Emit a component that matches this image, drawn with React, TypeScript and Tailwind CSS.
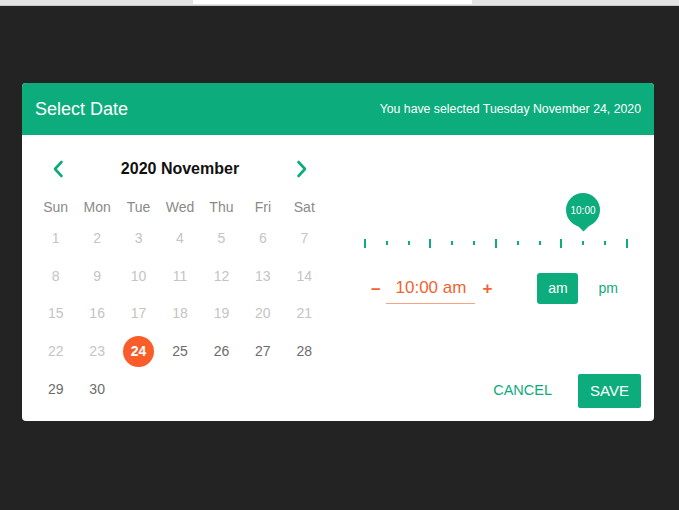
const green = "bg-[#0dac7c]";

const weekdays = ["Sun", "Mon", "Tue", "Wed", "Thu", "Fri", "Sat"];
const days = Array.from({ length: 30 }, (_, i) => i + 1);
const selected = 24;

function Chevron({ dir }: { dir: "left" | "right" }) {
  return (
    <svg width="12" height="18" viewBox="0 0 12 18" fill="none">
      <path
        d={dir === "left" ? "M9.5 2 L3 9 L9.5 16" : "M2.5 2 L9 9 L2.5 16"}
        stroke="#0dac7c"
        strokeWidth="2.6"
        strokeLinecap="round"
        strokeLinejoin="round"
      />
    </svg>
  );
}

function Calendar() {
  return (
    <div className="w-[290px] shrink-0 pt-[21px]">
      <div className="flex h-[26px] items-center justify-between px-[17px]">
        <Chevron dir="left" />
        <span className="text-[16px] font-bold text-[#111]">2020 November</span>
        <Chevron dir="right" />
      </div>

      <div className="mt-[12px] grid h-[26px] grid-cols-7 items-center text-center text-[14px] text-[#8a8a8a]">
        {weekdays.map((d) => (
          <span key={d}>{d}</span>
        ))}
      </div>

      <div className="grid grid-cols-7 text-center text-[14px]">
        {days.map((d) => (
          <div key={d} className="flex h-[37.6px] items-center justify-center">
            {d === selected ? (
              <span className="flex h-[31px] w-[31px] items-center justify-center rounded-full bg-[#f95d29] font-bold text-white">
                {d}
              </span>
            ) : (
              <span className={d > selected ? "text-[#6c6c6c]" : "text-[#c4c4c4]"}>{d}</span>
            )}
          </div>
        ))}
      </div>
    </div>
  );
}

function TimeSlider() {
  const ticks = Array.from({ length: 13 }, (_, i) => i);
  return (
    <div className="relative mr-[13px] h-[55px]">
      {/* thumb */}
      <div className="absolute left-[202px] top-0 h-[40px] w-[34px]">
        <div className="absolute left-[8.5px] top-[18px] h-[17px] w-[17px] rotate-45 bg-[#0dac7c]" />
        <div className="absolute left-0 top-0 flex h-[34px] w-[34px] items-center justify-center rounded-full bg-[#0dac7c] text-[10px] text-white">
          10:00
        </div>
      </div>
      <div className="absolute bottom-0 left-0 right-0 flex h-[10px] items-center justify-between">
        {ticks.map((t) => (
          <span
            key={t}
            className={`w-[2px] bg-[#0dac7c] ${t % 3 === 0 ? "h-[9px]" : "h-[4px]"}`}
          />
        ))}
      </div>
    </div>
  );
}

function TimePanel() {
  return (
    <div className="ml-[39px] flex flex-1 flex-col pb-[13px] pr-[13px] pt-[58px]">
      <TimeSlider />

      <div className="mt-[25px] flex items-center">
        <span className="ml-[7px] text-[17px] font-bold text-[#f4622f]">–</span>
        <div className="ml-[6px] flex h-[31px] w-[89px] items-center justify-center border-b border-[#f6a283] text-[17px] text-[#f4622f]">
          10:00 am
        </div>
        <span className="ml-[7px] text-[17px] font-semibold text-[#f4622f]">+</span>
        <button className={`ml-[45px] flex h-[31px] w-[41px] items-center justify-center rounded-[3px] ${green} text-[14px] text-white`}>
          am
        </button>
        <button className="ml-[20px] text-[14px] text-[#0dac7c]">pm</button>
      </div>

      <div className="mt-auto flex items-center justify-end">
        <button className="text-[14.5px] text-[#0dac7c]">CANCEL</button>
        <button className={`ml-[26px] flex h-[34px] w-[63px] items-center justify-center rounded-[2px] ${green} text-[15px] text-white`}>
          SAVE
        </button>
      </div>
    </div>
  );
}

export default function App() {
  return (
    <div
      className="h-[510px] w-[679px] overflow-hidden bg-[#232323]"
      style={{ fontFamily: '"Liberation Sans", Arial, sans-serif' }}
    >
      <div className="flex h-[6px] items-start border-b border-[#c9c9c9] bg-[#e3e3e3] pl-[193px]">
        <div className="h-[4px] w-[279px] bg-white" />
      </div>

      <div className="ml-[22px] mt-[77px] w-[632px] overflow-hidden rounded-[4px] bg-white">
        <div className={`flex h-[52px] items-center justify-between ${green} px-[13px] text-white`}>
          <span className="text-[18px]">Select Date</span>
          <span className="text-[12.3px]">You have selected Tuesday November 24, 2020</span>
        </div>

        <div className="flex h-[286px] pl-[13px]">
          <Calendar />
          <TimePanel />
        </div>
      </div>
    </div>
  );
}
